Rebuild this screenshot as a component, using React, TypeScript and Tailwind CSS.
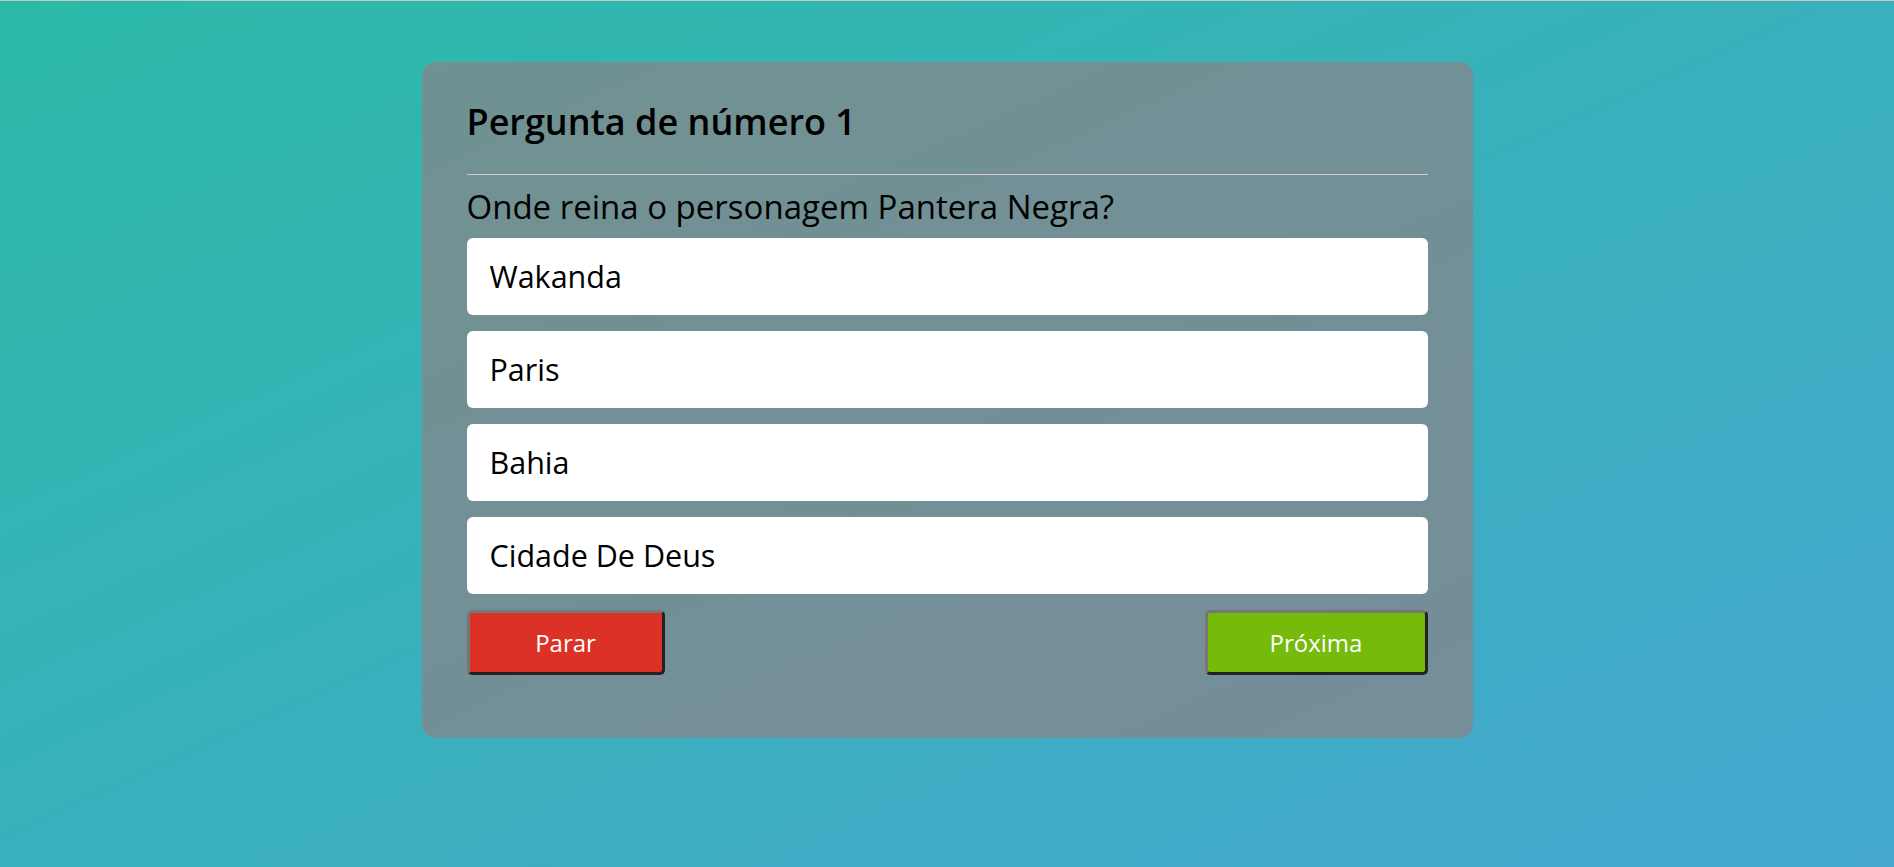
const answers = ["Wakanda", "Paris", "Bahia", "Cidade De Deus"];

export default function App() {
    return (
        <div
            className="min-h-screen border-t border-[#c9c9c9] bg-gradient-to-br from-[#2bb9a7] to-[#45a7d0] pt-[61px]"
            style={{ fontFamily: "'Open Sans', Lato, sans-serif" }}
        >
            {/* Quiz card */}
            <div className="mx-auto w-[1051px] rounded-[14px] bg-[rgba(140,130,134,0.7)] px-[45px] pt-[36px] pb-[63px]">
                <h1 className="text-[36px] font-semibold leading-[48px] text-black">
                    Pergunta de número 1
                </h1>
                <hr className="mt-[28px] border-t border-[#d3cccc]" />
                <p className="mt-[12px] text-[33px] leading-[40px] text-black">
                    Onde reina o personagem Pantera Negra?
                </p>

                {/* Answers */}
                <div className="mt-[11px] flex flex-col gap-[16px]">
                    {answers.map((answer) => (
                        <button
                            key={answer}
                            className="flex h-[77px] items-center rounded-[6px] bg-white pl-[23px] text-left text-[30.5px] text-black"
                        >
                            {answer}
                        </button>
                    ))}
                </div>

                {/* Actions */}
                <div className="mt-[16px] flex items-center justify-between">
                    <button className="h-[65px] w-[198px] rounded-[5px] border-[3px] border-t-[#777777] border-l-[#777777] border-r-[#222222] border-b-[#222222] bg-[#dc3127] text-[24px] text-white">
                        Parar
                    </button>
                    <button className="h-[65px] w-[223px] rounded-[5px] border-[3px] border-t-[#777777] border-l-[#777777] border-r-[#222222] border-b-[#222222] bg-[#76bb0c] text-[24px] text-white">
                        Próxima
                    </button>
                </div>
            </div>
        </div>
    );
}
